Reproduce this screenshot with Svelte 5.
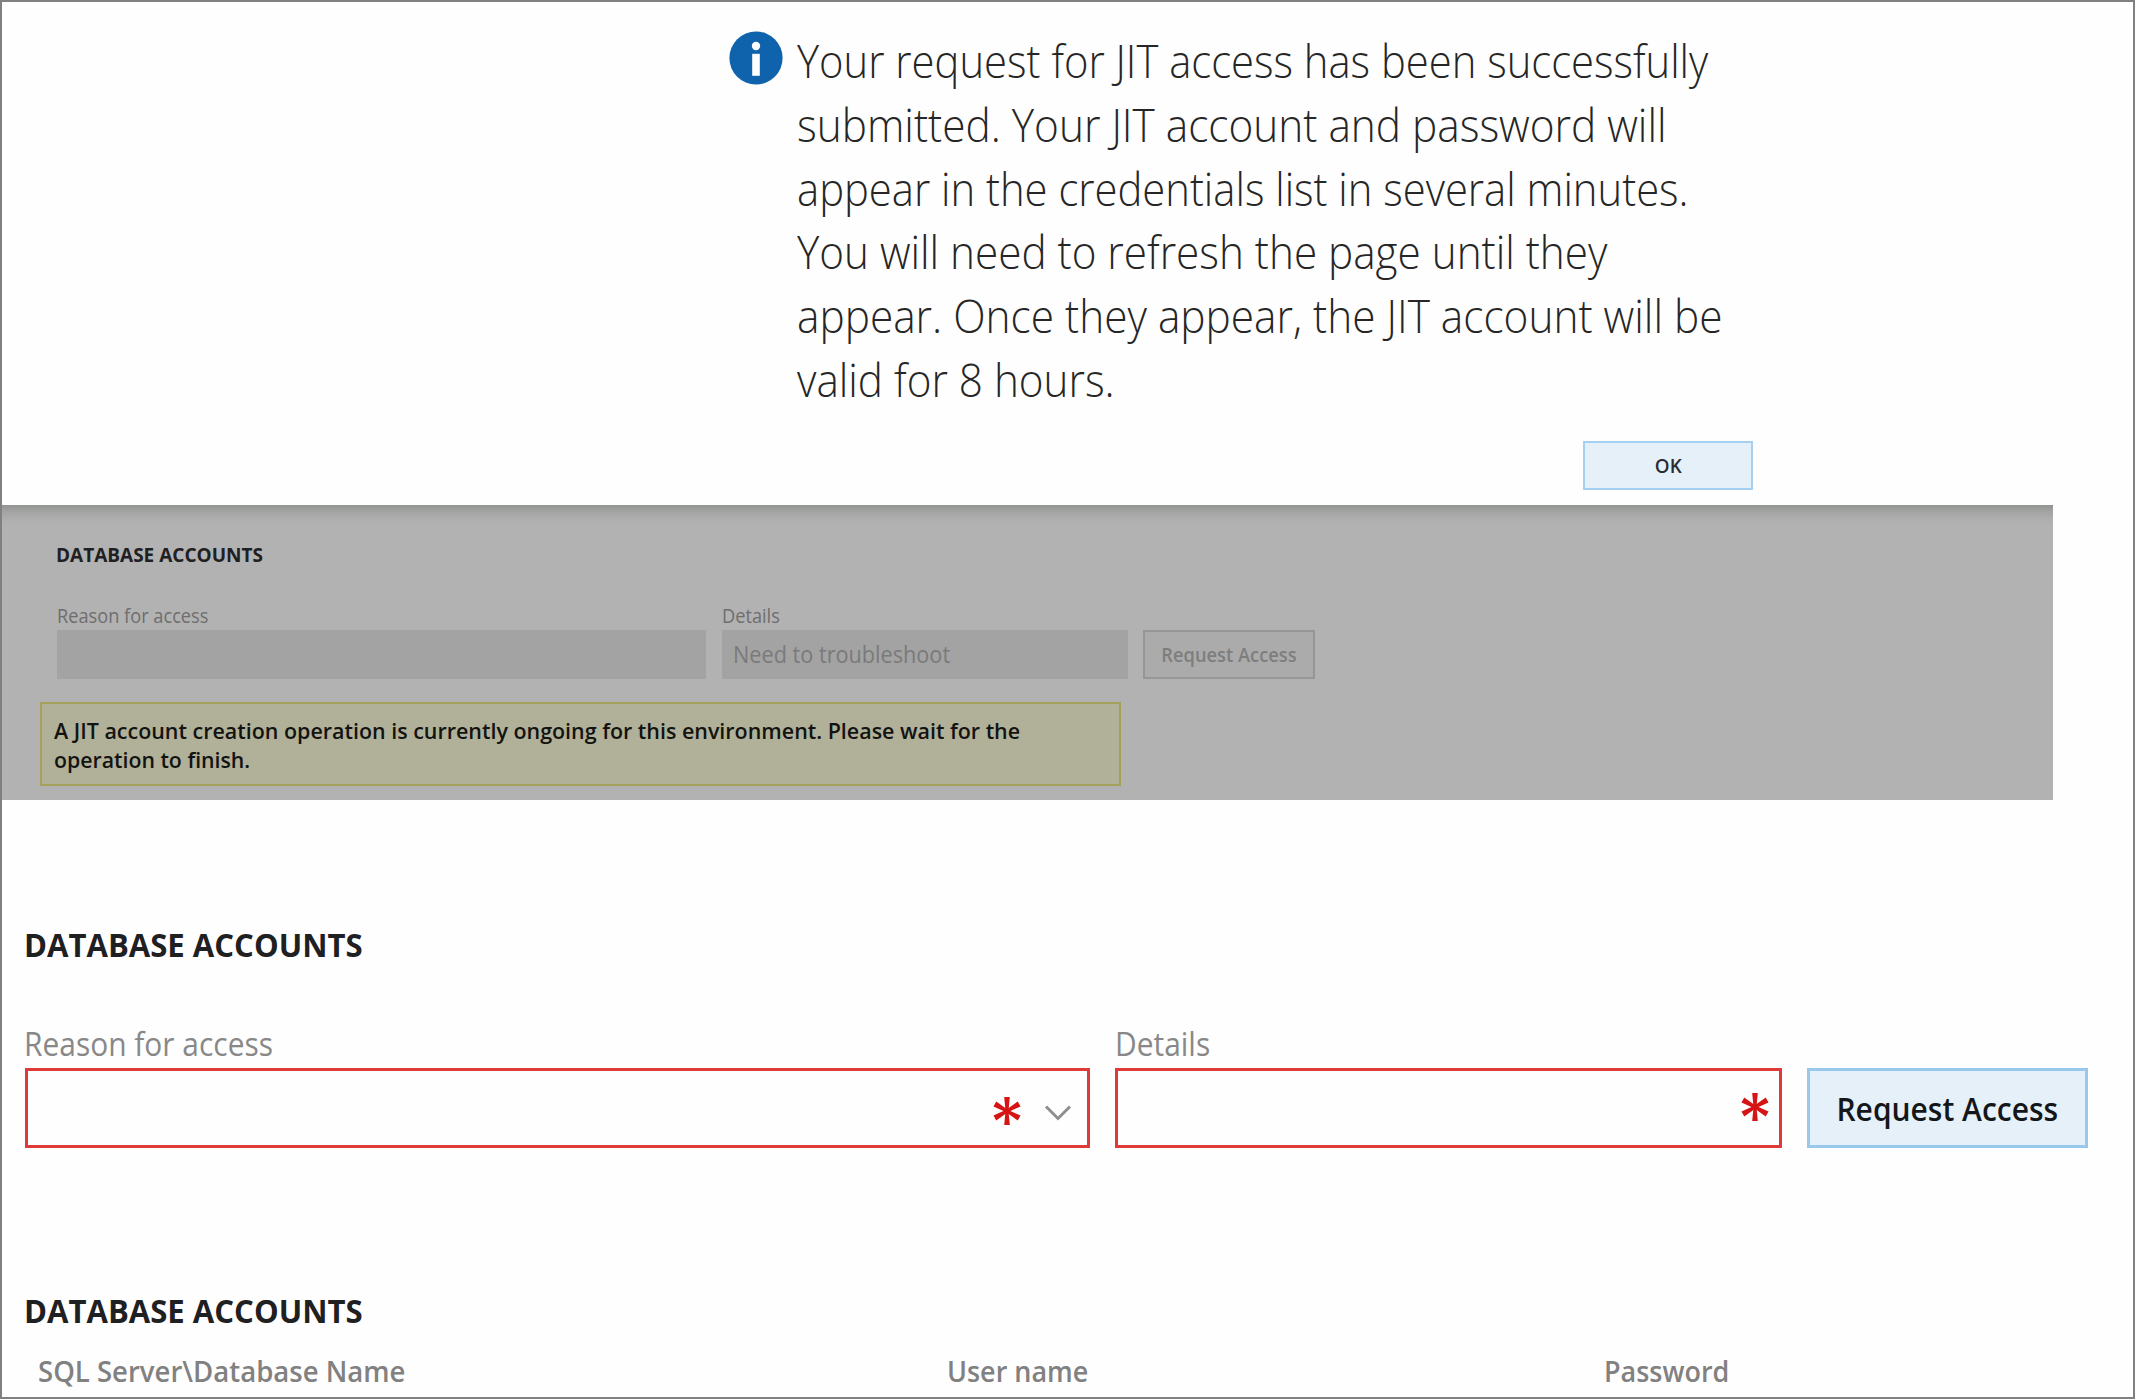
<script>
  // Each line carries the horizontal condensation of its lettering.
  const message = [
    { text: 'Your request for JIT access has been successfully', fit: 0.9085 },
    { text: 'submitted. Your JIT account and password will', fit: 0.9205 },
    { text: 'appear in the credentials list in several minutes.', fit: 0.908 },
    { text: 'You will need to refresh the page until they', fit: 0.918 },
    { text: 'appear. Once they appear, the JIT account will be', fit: 0.921 },
    { text: 'valid for 8 hours.', fit: 0.918 }
  ];
  const notice = [
    { text: 'A JIT account creation operation is currently ongoing for this environment. Please wait for the', fit: 0.9747 },
    { text: 'operation to finish.', fit: 0.9676 }
  ];
  const columns = [
    { text: 'SQL Server\\Database Name', fit: 0.95 },
    { text: 'User name', fit: 0.929 },
    { text: 'Password', fit: 0.93 }
  ];
</script>

{#snippet fitted(text, fit)}
  <span class="fit" style:--fit={fit}>{text}</span>
{/snippet}

{#snippet asterisk(cls)}
  <svg class="asterisk {cls}" viewBox="-14 -14 28 28" aria-hidden="true">
    {#each [0, 60, 120, 180, 240, 300] as angle}
      <path d="M-1.5 0 L-2.8 -14 H2.8 L1.5 0Z" transform="rotate({angle})" />
    {/each}
  </svg>
{/snippet}

<main class="page">
  <section class="dialog">
    <div class="dialog-body">
      <svg class="info" viewBox="0 0 54 54" aria-hidden="true">
        <circle cx="27" cy="27" r="26.6" fill="#0f62ac" />
        <circle cx="27" cy="15" r="4.2" fill="#fff" />
        <rect x="23.2" y="22.8" width="7.6" height="22" fill="#fff" />
      </svg>
      <div class="message">
        {#each message as line}
          <div>{@render fitted(line.text, line.fit)}</div>
        {/each}
      </div>
    </div>
    <button class="ok">{@render fitted('OK', 0.94)}</button>
  </section>

  <section class="dimmed">
    <h2>{@render fitted('DATABASE ACCOUNTS', 0.95)}</h2>
    <div class="form">
      <div class="field reason">
        <span class="label">{@render fitted('Reason for access', 0.91)}</span>
        <div class="box"></div>
      </div>
      <div class="field details">
        <span class="label">{@render fitted('Details', 0.91)}</span>
        <div class="box">{@render fitted('Need to troubleshoot', 0.942)}</div>
      </div>
      <button class="request">{@render fitted('Request Access', 0.914)}</button>
    </div>
    <div class="notice">
      {#each notice as line}
        <div>{@render fitted(line.text, line.fit)}</div>
      {/each}
    </div>
  </section>

  <section class="active">
    <h2>{@render fitted('DATABASE ACCOUNTS', 0.9714)}</h2>
    <div class="form">
      <div class="field reason">
        <span class="label">{@render fitted('Reason for access', 0.935)}</span>
        <div class="box">
          {@render asterisk('low')}
          <svg class="chevron" viewBox="0 0 28 18" aria-hidden="true">
            <path d="M2 2.5 L14 14.5 L26 2.5" fill="none" stroke="#8c8e90" stroke-width="3" />
          </svg>
        </div>
      </div>
      <div class="field details">
        <span class="label">{@render fitted('Details', 0.935)}</span>
        <div class="box">{@render asterisk('')}</div>
      </div>
      <button class="request">{@render fitted('Request Access', 0.937)}</button>
    </div>
  </section>

  <section class="accounts">
    <h2>{@render fitted('DATABASE ACCOUNTS', 0.9714)}</h2>
    <div class="columns">
      {#each columns as column}
        <span>{@render fitted(column.text, column.fit)}</span>
      {/each}
    </div>
  </section>
</main>

<style>
  :global(body) {
    margin: 0;
    overflow: hidden;
  }

  .page,
  .page * {
    box-sizing: border-box;
  }

  .page {
    display: flex;
    flex-direction: column;
    width: 2135px;
    height: 1399px;
    border: 2px solid #808080;
    background: #fefefe;
    font-family: 'Open Sans', sans-serif;
    overflow: hidden;
  }

  .fit {
    display: inline-block;
    white-space: nowrap;
    transform: scaleX(var(--fit));
    transform-origin: left center;
  }

  button {
    padding: 0;
    font: inherit;
  }

  h2 {
    margin: 0;
    font-weight: 700;
    color: #1f2021;
  }

  svg {
    display: block;
    flex: none;
  }

  .ok .fit,
  .request .fit {
    transform-origin: center;
  }

  /* Confirmation dialog */
  .dialog {
    display: flex;
    flex: none;
    flex-direction: column;
    height: 503px;
    padding-left: 727px;
  }

  .dialog-body {
    display: flex;
    gap: 13.5px;
    padding-top: 27px;
    height: 438.5px;
  }

  .info {
    width: 54px;
    height: 54px;
    margin-top: 1.5px;
  }

  .message {
    font-size: 46px;
    font-weight: 300;
    line-height: 63.8px;
    color: #262626;
  }

  .message > div {
    height: 63.8px;
  }

  .ok {
    width: 170px;
    height: 49px;
    margin-left: 854px;
    border: 2px solid #a5d0f1;
    background: #e6f0f9;
    color: #2a2d30;
    font-size: 20px;
    font-weight: 600;
  }

  /* Page content behind the dialog */
  .dimmed {
    flex: none;
    width: 2051px;
    height: 295px;
    padding: 35px 0 0 38px;
    background: linear-gradient(#929492, #a3a4a3 7px, #aeaeae 14px, #b2b2b2 20px);
  }

  .dimmed h2 {
    padding-left: 16px;
    font-size: 20px;
    line-height: 30px;
  }

  .form {
    display: flex;
    align-items: flex-end;
  }

  .field {
    display: flex;
    flex-direction: column;
  }

  .dimmed .form {
    gap: 16px;
    padding: 34px 0 0 17px;
  }

  .dimmed .label {
    height: 26px;
    font-size: 20px;
    line-height: 24px;
    color: #6e6e6e;
  }

  .dimmed .box {
    height: 48.5px;
    padding-left: 10.5px;
    background: #a3a3a3;
    color: #7a7a7a;
    font-size: 23px;
    line-height: 49px;
  }

  .dimmed .reason {
    width: 649px;
  }

  .dimmed .details {
    width: 406px;
  }

  .dimmed .request {
    width: 172px;
    height: 48.5px;
    margin-left: -1px;
    border: 2px solid #969696;
    background: #ababab;
    color: #7e7e7e;
    font-size: 20px;
    font-weight: 600;
  }

  .notice {
    width: 1081px;
    height: 84px;
    margin-top: 23.5px;
    padding: 11.5px 11.5px;
    border: 2px solid #a3a15a;
    background: #b1b199;
    color: #131311;
    font-size: 22px;
    font-weight: 600;
    line-height: 29.5px;
  }

  .notice > div {
    height: 29.5px;
  }

  /* Live request form */
  .active {
    padding: 125px 0 0 23px;
  }

  .active h2,
  .accounts h2 {
    font-size: 32px;
    line-height: 40px;
  }

  .active h2 .fit,
  .accounts h2 .fit,
  .active .reason .label .fit {
    margin-left: -0.6px;
  }

  .active .form {
    padding-top: 59px;
  }

  .active .label {
    height: 44px;
    font-size: 32px;
    line-height: 40px;
    color: #888;
  }

  .active .box {
    display: flex;
    align-items: center;
    justify-content: flex-end;
    height: 80px;
    border: 3px solid #df3a3a;
    background: #fefefe;
  }

  .active .reason {
    width: 1065px;
    margin-right: 25px;
  }

  .active .details {
    width: 667px;
    margin-right: 25px;
  }

  .active .reason .box {
    padding-right: 15px;
  }

  .active .details .box {
    padding-right: 10px;
    padding-bottom: 2px;
  }

  .asterisk {
    width: 28px;
    height: 28px;
    overflow: visible;
    fill: #d61414;
  }

  .asterisk.low {
    margin: 5px 23px 0 0;
  }

  .chevron {
    width: 28px;
    height: 18px;
    margin-top: 9px;
  }

  .active .request {
    width: 281px;
    height: 80px;
    border: 3px solid #98c9ec;
    background: #e6f0f9;
    color: #14171a;
    font-size: 32px;
    font-weight: 600;
  }

  /* Credentials list */
  .accounts {
    padding: 143px 0 0 23px;
  }

  .columns {
    display: grid;
    grid-template-columns: 909.5px 657px 1fr;
    padding: 21.7px 0 0 12.5px;
    color: #818181;
    font-size: 29px;
    font-weight: 600;
    line-height: 36px;
  }
</style>
